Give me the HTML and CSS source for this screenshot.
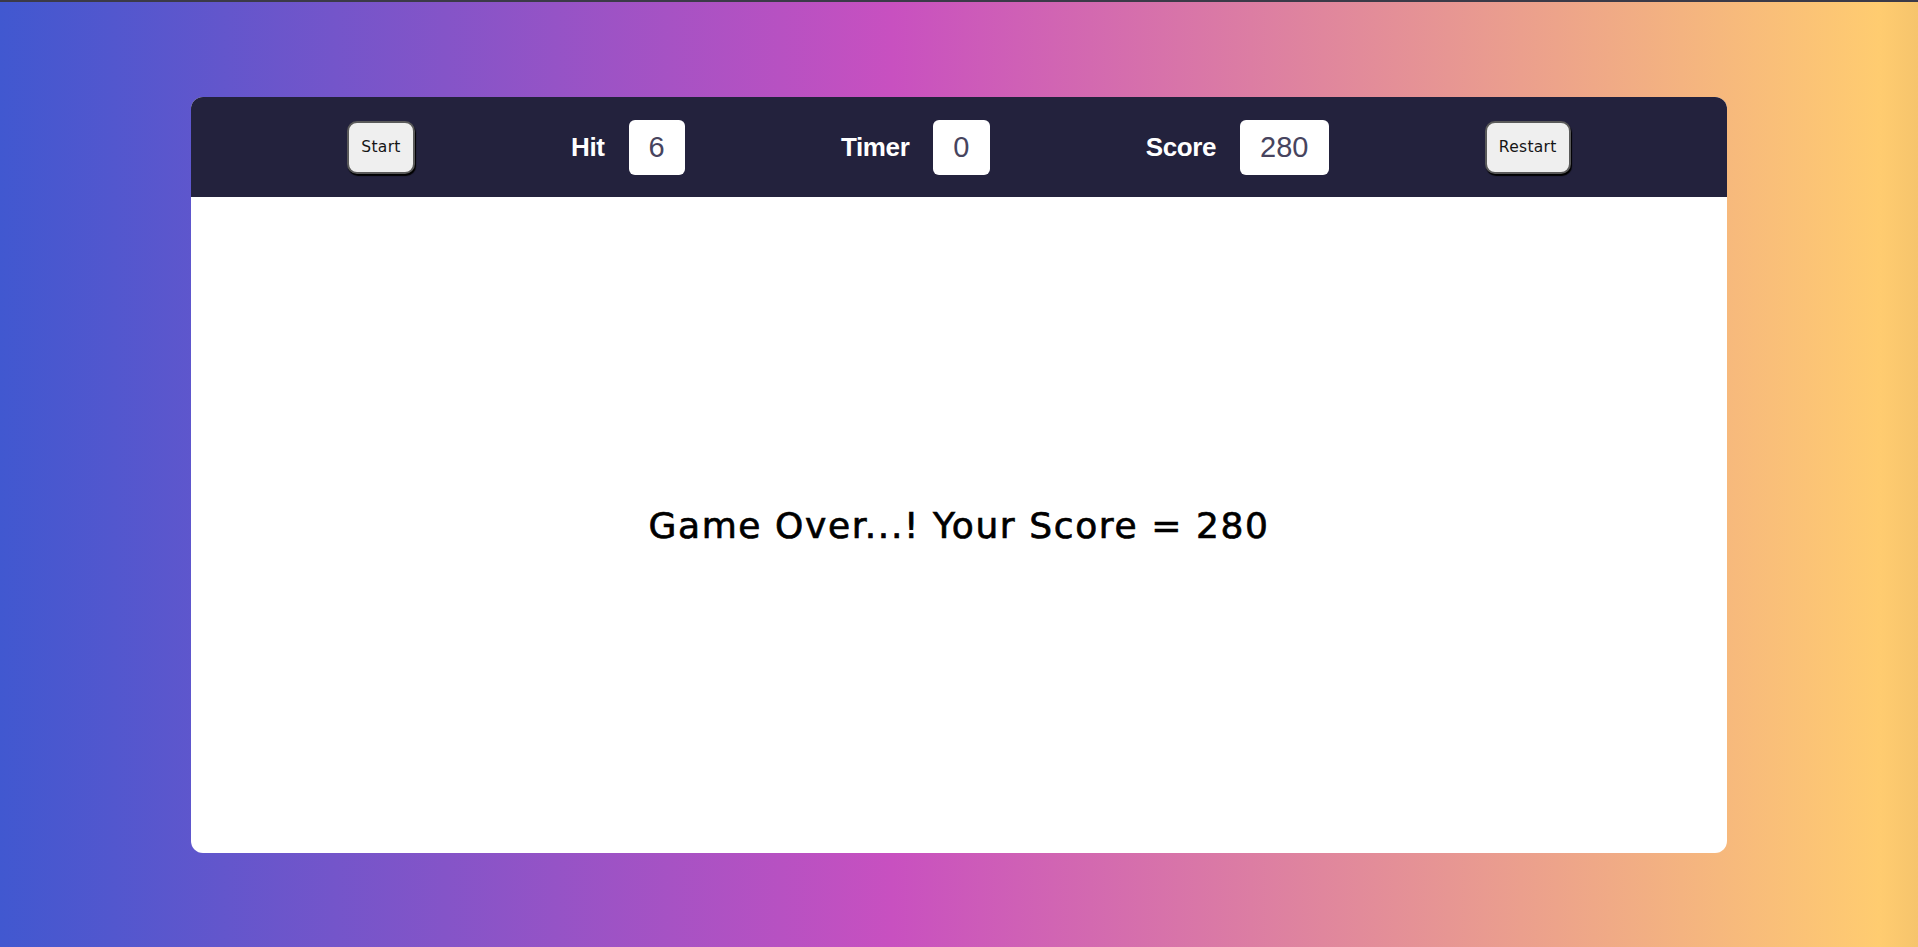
FILE: index.html
```html
<!DOCTYPE html>
<html lang="en">
<head>
<meta charset="utf-8">
<title>Hit Game</title>
<link rel="stylesheet" href="styles.css">
</head>
<body>
  <main class="game">
    <header class="bar">
      <button class="btn">Start</button>
      <div class="stat">
        <span class="label">Hit</span>
        <span class="value">6</span>
      </div>
      <div class="stat">
        <span class="label">Timer</span>
        <span class="value">0</span>
      </div>
      <div class="stat">
        <span class="label">Score</span>
        <span class="value">280</span>
      </div>
      <button class="btn">Restart</button>
    </header>
    <section class="board">
      <h1 class="over">Game Over...! Your Score = 280</h1>
    </section>
  </main>
</body>
</html>
```

FILE: styles.css
```css
html, body {
  margin: 0;
  padding: 0;
}

body {
  min-height: 945px;
  border-top: 2px solid #3b3a48;
  background: linear-gradient(90deg, #4158D0 0%, #C850C0 46.5%, #FFCC70 98%, #f6c46c 100%);
  font-family: "DejaVu Sans", sans-serif;
  overflow: hidden;
}

.game {
  width: 1536px;
  height: 756px;
  margin: 95px 0 0 191px;
  border-radius: 12px;
  overflow: hidden;
  background: #ffffff;
  display: flex;
  flex-direction: column;
}

.bar {
  height: 100px;
  flex: none;
  background: #23223d;
  display: flex;
  align-items: center;
  justify-content: space-evenly;
}

.btn {
  height: 53px;
  padding: 0 12px;
  border: 2px solid #5a5a5a;
  border-radius: 10px;
  background: #efefef;
  box-shadow: 1px 2px 1px #000;
  font-family: "DejaVu Sans", sans-serif;
  font-size: 15.5px;
  letter-spacing: 0.3px;
  color: #151515;
  cursor: pointer;
}

.stat {
  display: flex;
  align-items: center;
  gap: 24px;
}

.label {
  font-family: "Liberation Sans", Arial, sans-serif;
  font-weight: 700;
  font-size: 26px;
  color: #ffffff;
  letter-spacing: -0.4px;
}

.value {
  height: 55px;
  padding: 0 20px;
  box-sizing: border-box;
  display: flex;
  align-items: center;
  justify-content: center;
  background: #ffffff;
  border-radius: 6px;
  font-family: "Liberation Sans", Arial, sans-serif;
  font-size: 29px;
  color: #47445e;
}

.board {
  flex: 1;
  display: flex;
  align-items: center;
  justify-content: center;
}

.over {
  margin: 0;
  font-family: "DejaVu Sans", sans-serif;
  font-weight: 500;
  font-size: 36px;
  letter-spacing: 1.6px;
  -webkit-text-stroke: 0.7px #000;
  color: #000000;
}
```
